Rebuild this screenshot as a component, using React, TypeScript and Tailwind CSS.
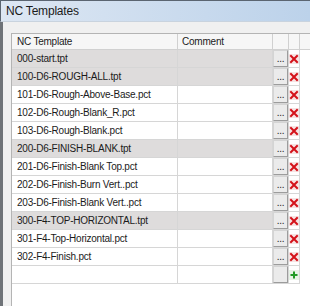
import React from "react";

type Row = { name: string; group?: boolean };

const rows: Row[] = [
  { name: "000-start.tpt", group: true },
  { name: "100-D6-ROUGH-ALL.tpt", group: true },
  { name: "101-D6-Rough-Above-Base.pct" },
  { name: "102-D6-Rough-Blank_R.pct" },
  { name: "103-D6-Rough-Blank.pct" },
  { name: "200-D6-FINISH-BLANK.tpt", group: true },
  { name: "201-D6-Finish-Blank Top.pct" },
  { name: "202-D6-Finish-Burn Vert..pct" },
  { name: "203-D6-Finish-Blank Vert..pct" },
  { name: "300-F4-TOP-HORIZONTAL.tpt", group: true },
  { name: "301-F4-Top-Horizontal.pct" },
  { name: "302-F4-Finish.pct" },
];

function DeleteIcon() {
  return (
    <svg width="10" height="10" viewBox="0 0 10 10">
      <rect x="0" y="0" width="10" height="10" fill="#f7e4e4" />
      <path d="M2 2 L8 8 M8 2 L2 8" stroke="#d4121a" strokeWidth="2" strokeLinecap="square" />
    </svg>
  );
}

function AddIcon() {
  return (
    <svg width="10" height="10" viewBox="0 0 10 10">
      <rect x="0" y="0" width="10" height="10" fill="#e6f3e6" />
      <path d="M5 1.5 V8.5 M1.5 5 H8.5" stroke="#1f9a25" strokeWidth="2" />
    </svg>
  );
}

function BrowseButton({ label }: { label?: string }) {
  return (
    <div className="h-full w-full flex items-end justify-center bg-[#ebebeb] border border-t-[#d4d4d4] border-l-[#d4d4d4] border-r-[#9c9c9c] border-b-[#9c9c9c] pb-[2px] text-[10px] leading-none text-[#222]">
      {label}
    </div>
  );
}

function GridRow({ row }: { row?: Row }) {
  const bg = row?.group ? "bg-[#dedcdc]" : "bg-white";
  return (
    <div className="flex h-[18px] shrink-0">
      <div className={`w-[166px] shrink-0 flex items-center pl-[5px] border-r border-b border-[#d6d6d6] ${bg}`}>
        {row?.name}
      </div>
      <div className={`w-[95px] shrink-0 border-r border-b border-[#d6d6d6] ${bg}`} />
      <div className="w-[16px] shrink-0 border-r border-b border-[#d6d6d6] bg-white p-[0px]">
        <BrowseButton label={row ? "..." : undefined} />
      </div>
      <div className="w-[11px] shrink-0 flex items-center justify-center border-r border-b border-[#d6d6d6] bg-white">
        {row ? <DeleteIcon /> : <AddIcon />}
      </div>
      <div className="flex-1 bg-white" />
    </div>
  );
}

export default function App() {
  return (
    <div className="w-[310px] h-[306px] overflow-hidden flex flex-col bg-[#f0f0f0] text-[#1b1b1b] font-['Liberation_Sans',Arial,sans-serif]">
      <div className="h-[22px] shrink-0 flex items-center pl-[5px] border-t border-l border-[#5b6571] border-b border-b-[#c9d3de] bg-gradient-to-r from-[#dde7f3] to-[#bcd2ea] text-[12px] tracking-[-0.2px]">
        NC Templates
      </div>
      <div className="flex flex-1 min-h-0">
        <div className="w-[3px] shrink-0 bg-[#6f7378]" />
        <div className="flex-1 pt-[11px] pl-[8px] min-h-0">
          <div className="h-full flex flex-col bg-white border-l border-t border-[#b4b4b4] text-[10px] tracking-[-0.22px]">
            <div className="flex h-[16px] shrink-0 bg-[#f6f6f6]">
              <div className="w-[166px] shrink-0 flex items-center pl-[5px] border-r border-b border-[#d0d0d0]">
                NC Template
              </div>
              <div className="w-[95px] shrink-0 flex items-center pl-[4px] border-r border-b border-[#d0d0d0]">
                Comment
              </div>
              <div className="w-[16px] shrink-0 border-r border-b border-[#d0d0d0]" />
              <div className="w-[11px] shrink-0 border-r border-b border-[#d0d0d0]" />
              <div className="flex-1 border-b border-[#d0d0d0]" />
            </div>
            {rows.map((r) => (
              <GridRow key={r.name} row={r} />
            ))}
            <GridRow />
          </div>
        </div>
      </div>
    </div>
  );
}
